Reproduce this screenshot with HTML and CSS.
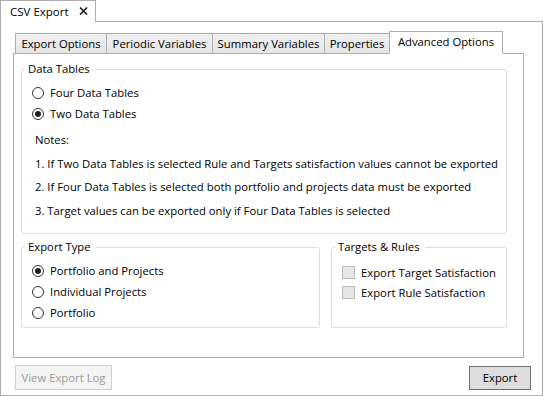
FILE: index.html
```html
<!DOCTYPE html>
<html>
<head>
<meta charset="utf-8">
<link rel="stylesheet" href="styles.css">
</head>
<body>
<div class="doc-tabs">
  <div class="doc-tab">
    <span class="doc-title">CSV Export</span>
    <svg class="close" width="9" height="8" viewBox="0 0 9 8"><path d="M1 0.5 L8 7.5 M8 0.5 L1 7.5" stroke="#1a1a1a" stroke-width="1.6" fill="none"/></svg>
  </div>
</div>
<div class="window">
  <div class="tabstrip">
    <div class="tab tab-export">Export Options</div>
    <div class="tab tab-periodic">Periodic Variables</div>
    <div class="tab tab-summary">Summary Variables</div>
    <div class="tab tab-props">Properties</div>
    <div class="tab tab-adv tab-selected">Advanced Options</div>
  </div>
  <div class="panel">
    <fieldset class="group group-data">
      <legend>Data Tables</legend>
      <div class="radio-row"><span class="radio"></span>Four Data Tables</div>
      <div class="radio-row"><span class="radio radio-on"></span>Two Data Tables</div>
      <div class="notes">
        <p>Notes:</p>
        <p>1. If Two Data Tables is selected Rule and Targets satisfaction values cannot be exported</p>
        <p>2. If Four Data Tables is selected both portfolio and projects data must be exported</p>
        <p>3. Target values can be exported only if Four Data Tables is selected</p>
      </div>
    </fieldset>
    <div class="group-row">
      <fieldset class="group group-type">
        <legend>Export Type</legend>
        <div class="radio-row"><span class="radio radio-on"></span>Portfolio and Projects</div>
        <div class="radio-row"><span class="radio"></span>Individual Projects</div>
        <div class="radio-row"><span class="radio"></span>Portfolio</div>
      </fieldset>
      <fieldset class="group group-rules">
        <legend>Targets &amp; Rules</legend>
        <div class="check-row"><span class="check"></span>Export Target Satisfaction</div>
        <div class="check-row"><span class="check"></span>Export Rule Satisfaction</div>
      </fieldset>
    </div>
  </div>
  <div class="footer">
    <button class="btn btn-log">View Export Log</button>
    <button class="btn btn-export">Export</button>
  </div>
</div>
</body>
</html>
```
FILE: styles.css
```css
* { box-sizing: border-box; }
body {
  margin: 0;
  background: #fff;
  font-family: "Open Sans", "Noto Sans", sans-serif;
  font-size: 11.3px;
  color: #000;
}
.doc-tabs { display: flex; }
.doc-tab {
  position: relative;
  z-index: 1;
  width: 96px;
  height: 22px;
  margin-bottom: -1px;
  border: 1px solid #acacac;
  border-bottom: 0;
  background: #fff;
  display: flex;
  align-items: center;
  padding: 0 7px 1px 9px;
}
.doc-title { font-size: 11.5px; }
.close { margin-left: auto; }

.window {
  height: 375px;
  border: 1px solid #acacac;
  display: flex;
  flex-direction: column;
  padding: 9px 0 5px;
}
.tabstrip {
  position: relative;
  z-index: 1;
  display: flex;
  align-items: flex-end;
  margin-left: 14px;
}
.tab {
  height: 21px;
  border: 1px solid #acacac;
  background: linear-gradient(#f0f0f0, #e5e5e5);
  display: flex;
  align-items: center;
  justify-content: center;
  margin-left: -1px;
  white-space: nowrap;
  padding-bottom: 1px;
}
.tab:first-child { margin-left: 0; }
.tab-export { width: 92px; }
.tab-periodic { width: 107px; }
.tab-summary { width: 113px; }
.tab-props { width: 66px; }
.tab-adv { width: 114px; }
.tab-selected {
  height: 23px;
  background: #fff;
  border-bottom-color: #fff;
  padding-bottom: 2px;
}
.panel {
  flex: 1;
  margin: -1px 18px 0 12px;
  border: 1px solid #acacac;
  background: #fff;
  padding: 7px 0 0 7px;
}
.group {
  margin: 0;
  padding: 0;
  min-width: 0;
  border: 1px solid #d5dfe5;
  border-radius: 3px;
}
.group legend {
  margin-left: 3px;
  padding: 0 5px 0 3px;
  line-height: 16px;
}
.group-data {
  width: 486px;
  padding: 5px 0 11px;
}
.radio-row {
  display: flex;
  align-items: center;
  height: 21px;
  padding-left: 10px;
}
.radio {
  width: 12px;
  height: 12px;
  border: 1px solid #333;
  border-radius: 50%;
  background: #fff;
  margin-right: 6px;
  display: flex;
  align-items: center;
  justify-content: center;
}
.radio-on::after {
  content: "";
  width: 6px;
  height: 6px;
  border-radius: 50%;
  background: #212121;
}
.notes {
  margin: 4px 0 0 13px;
  line-height: 23.5px;
}
.notes p { margin: 0; }

.group-row {
  display: flex;
  gap: 11px;
  width: 486px;
  margin-top: 5px;
}
.group-type {
  width: 299px;
  padding: 5px 0 4px;
}
.group-rules {
  width: 176px;
  padding: 7px 0 0;
}
.check-row {
  display: flex;
  align-items: center;
  height: 20px;
  padding-left: 10px;
}
.check {
  width: 13px;
  height: 13px;
  border: 1px solid #bcbcbc;
  background: #e6e6e6;
  margin-right: 6px;
}

.footer {
  display: flex;
  justify-content: space-between;
  align-items: flex-end;
  margin-top: 7px;
  padding: 0 11px 0 14px;
}
.btn {
  font: inherit;
  height: 25px;
  padding: 0 0 1px;
  border: 1px solid #707070;
  background: #dddddd;
  color: #000;
}
.btn-log {
  width: 97px;
  border-color: #cfcfcf;
  background: #f4f4f4;
  color: #9a9a9a;
}
.btn-export {
  width: 62px;
  height: 24px;
}
```
